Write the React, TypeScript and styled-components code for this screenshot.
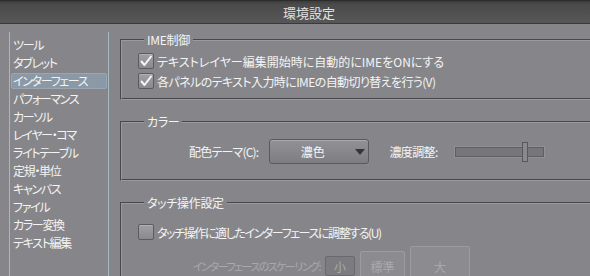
import React from 'react';
import styled, { createGlobalStyle } from 'styled-components';

const Global = createGlobalStyle`
  html, body { margin: 0; padding: 0; background: #86868a; overflow: hidden; }
  body {
    font-family: "Noto Sans CJK JP", "Noto Sans", sans-serif;
    font-size: 12px;
    color: #f4f4f4;
    font-feature-settings: "palt";
  }
  * { box-sizing: border-box; }
`;

const Window = styled.div`
  width: 590px;
  height: 276px;
  display: flex;
  flex-direction: column;
  overflow: hidden;
  background: #86868a;
`;

const TitleBar = styled.div`
  height: 24px;
  flex: none;
  display: flex;
  align-items: center;
  justify-content: center;
  padding-left: 28px;
  background: linear-gradient(#3c3c3c, #4a4a4a 15%, #575757);
  border-top: 1px solid #2c2c2c;
  border-bottom: 1px solid #3a3a3a;
  color: #e2e2e2;
  font-size: 13px;
`;

const Body = styled.div`
  flex: 1;
  display: flex;
  min-height: 0;
`;

const Sidebar = styled.ul`
  list-style: none;
  margin: 8px 0 0 9px;
  padding: 4px 0 0;
  width: 100px;
  flex: none;
  border-left: 1px solid #a3bac0;
  border-right: 1px solid #a3bac0;
  display: flex;
  flex-direction: column;
`;

const Item = styled.li<{ $selected?: boolean }>`
  height: 16px;
  margin: 1px 1px;
  padding-left: 1px;
  line-height: 16px;
  white-space: nowrap;
  letter-spacing: -1.3px;
  border-radius: 2px;
  border: 1px solid ${p => (p.$selected ? '#9aa7b2' : 'transparent')};
  background: ${p => (p.$selected ? '#8b99a6' : 'transparent')};
  display: flex;
  align-items: center;
`;

const Content = styled.div`
  flex: none;
  width: 520px;
  padding: 9px 0 0 11px;
  display: flex;
  flex-direction: column;
`;

const Group = styled.fieldset<{ $pt: number; $pb: number }>`
  margin: 0 0 15px;
  padding: ${p => p.$pt}px 0 ${p => p.$pb}px 16px;
  min-width: 0;
  border: 2px groove #9a9a9e;
  display: flex;
  flex-direction: column;
`;

const Legend = styled.legend`
  margin-left: 6px;
  padding: 0 3px;
  line-height: 14px;
  font-size: 12px;
  color: #f4f4f4;
  letter-spacing: -0.3px;
`;

const CheckRow = styled.label<{ $ls?: number }>`
  display: flex;
  align-items: center;
  height: 20px;
  gap: 3px;
  white-space: nowrap;
  letter-spacing: ${p => p.$ls ?? 0}px;
`;

const Box = styled.span`
  width: 16px;
  height: 16px;
  flex: none;
  border: 1px solid #5c5c60;
  border-radius: 2px;
  background: linear-gradient(#a0a0a4, #8a8a8e);
  box-shadow: inset 0 1px 0 #b0b0b4;
  display: flex;
  align-items: center;
  justify-content: center;
`;

const ColorRow = styled.div`
  display: flex;
  align-items: center;
  height: 25px;
  margin-left: 51px;
  white-space: nowrap;
`;

const Label = styled.span<{ $disabled?: boolean; $gap?: number; $ls?: number; $size?: number }>`
  color: ${p => (p.$disabled ? '#a9a9ad' : '#f4f4f4')};
  margin-right: ${p => p.$gap ?? 0}px;
  letter-spacing: ${p => p.$ls ?? 0}px;
  font-size: ${p => p.$size ?? 12}px;
  white-space: nowrap;
`;

const Select = styled.div`
  width: 100px;
  height: 25px;
  border: 1px solid #5a5a5e;
  border-radius: 3px;
  background: linear-gradient(#929296, #7e7e82);
  box-shadow: inset 0 1px 0 #a8a8ac;
  display: flex;
  align-items: center;
  margin-right: 20px;
`;

const SelectValue = styled.span`
  flex: 1;
  text-align: center;
  color: #f6f6f6;
`;

const Arrow = styled.span`
  width: 0;
  height: 0;
  flex: none;
  margin-right: 3px;
  border-top: 6px solid #36363a;
  border-left: 5px solid transparent;
  border-right: 5px solid transparent;
`;

const Track = styled.div`
  position: relative;
  width: 89px;
  height: 10px;
  background: #77777b;
  border: 1px solid #5e5e62;
  box-shadow: 0 0 0 1px #929296;
`;

const Thumb = styled.div`
  position: absolute;
  left: 66px;
  top: -6px;
  width: 6px;
  height: 20px;
  background: #8a8a8e;
  border: 1px solid #58585c;
`;

const ScaleRow = styled.div`
  display: flex;
  align-items: center;
  gap: 5px;
  margin: 4px 0 0 55px;
  height: 40px;
`;

const ScaleBtn = styled.button<{ $w: number; $h: number; $active?: boolean }>`
  width: ${p => p.$w}px;
  height: ${p => p.$h}px;
  flex: none;
  padding: 0;
  font: inherit;
  font-size: 12px;
  color: #a9a9ad;
  border-radius: 2px;
  border: 1px solid ${p => (p.$active ? '#6a6a6e' : '#9c9ca0')};
  background: ${p => (p.$active ? '#7c7c80' : '#8c8c90')};
`;

const Check = () => (
  <svg width="14" height="14" viewBox="0 0 14 14">
    <path d="M2.5 7.5 L5.5 11 L12 2.5" fill="none" stroke="#f6f6f6" strokeWidth="2" strokeLinecap="round" strokeLinejoin="round" />
  </svg>
);

const items = [
  'ツール', 'タブレット', 'インターフェース', 'パフォーマンス', 'カーソル', 'レイヤー・コマ',
  'ライトテーブル', '定規・単位', 'キャンバス', 'ファイル', 'カラー変換', 'テキスト編集',
];

export default function App() {
  return (
    <Window>
      <Global />
      <TitleBar>環境設定</TitleBar>
      <Body>
        <Sidebar>
          {items.map(t => (
            <Item key={t} $selected={t === 'インターフェース'}>{t}</Item>
          ))}
        </Sidebar>
        <Content>
          <Group $pt={4} $pb={7}>
            <Legend>IME制御</Legend>
            <CheckRow><Box><Check /></Box>テキストレイヤー編集開始時に自動的にIMEをONにする</CheckRow>
            <CheckRow $ls={-0.6}><Box><Check /></Box>各パネルのテキスト入力時にIMEの自動切り替えを行う(V)</CheckRow>
          </Group>
          <Group $pt={10} $pb={15}>
            <Legend>カラー</Legend>
            <ColorRow>
              <Label $gap={11} $ls={-0.8}>配色テーマ(C):</Label>
              <Select><SelectValue>濃色</SelectValue><Arrow /></Select>
              <Label $gap={17} $ls={-0.6}>濃度調整:</Label>
              <Track><Thumb /></Track>
            </ColorRow>
          </Group>
          <Group $pt={12} $pb={10}>
            <Legend>タッチ操作設定</Legend>
            <CheckRow $ls={-1.4}><Box />タッチ操作に適したインターフェースに調整する(U)</CheckRow>
            <ScaleRow>
              <Label $disabled $size={11} $ls={-1.5}>インターフェースのスケーリング:</Label>
              <ScaleBtn $w={30} $h={20} $active>小</ScaleBtn>
              <ScaleBtn $w={45} $h={30}>標準</ScaleBtn>
              <ScaleBtn $w={60} $h={40}>大</ScaleBtn>
            </ScaleRow>
          </Group>
        </Content>
      </Body>
    </Window>
  );
}
